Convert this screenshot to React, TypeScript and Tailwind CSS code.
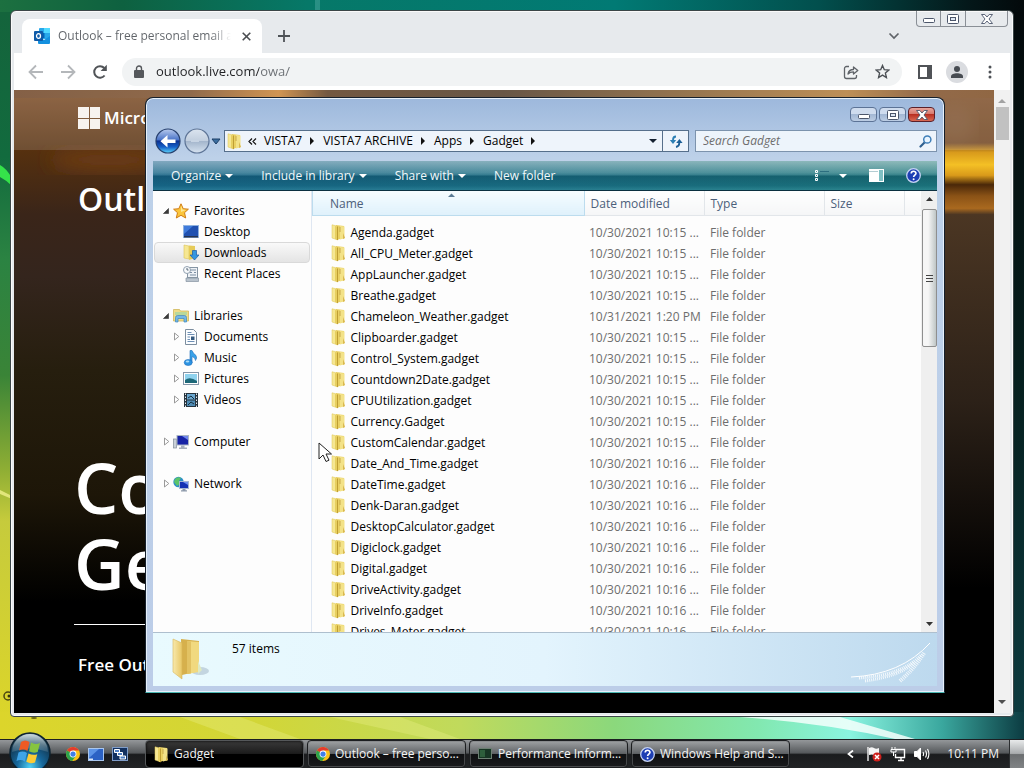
import type { ReactNode } from "react";

type FileRow = { name: string; date: string };

const FILES: FileRow[] = [
  { name: "Agenda.gadget", date: "10/30/2021 10:15 ..." },
  { name: "All_CPU_Meter.gadget", date: "10/30/2021 10:15 ..." },
  { name: "AppLauncher.gadget", date: "10/30/2021 10:15 ..." },
  { name: "Breathe.gadget", date: "10/30/2021 10:15 ..." },
  { name: "Chameleon_Weather.gadget", date: "10/31/2021 1:20 PM" },
  { name: "Clipboarder.gadget", date: "10/30/2021 10:15 ..." },
  { name: "Control_System.gadget", date: "10/30/2021 10:15 ..." },
  { name: "Countdown2Date.gadget", date: "10/30/2021 10:15 ..." },
  { name: "CPUUtilization.gadget", date: "10/30/2021 10:15 ..." },
  { name: "Currency.Gadget", date: "10/30/2021 10:15 ..." },
  { name: "CustomCalendar.gadget", date: "10/30/2021 10:15 ..." },
  { name: "Date_And_Time.gadget", date: "10/30/2021 10:16 ..." },
  { name: "DateTime.gadget", date: "10/30/2021 10:16 ..." },
  { name: "Denk-Daran.gadget", date: "10/30/2021 10:16 ..." },
  { name: "DesktopCalculator.gadget", date: "10/30/2021 10:16 ..." },
  { name: "Digiclock.gadget", date: "10/30/2021 10:16 ..." },
  { name: "Digital.gadget", date: "10/30/2021 10:16 ..." },
  { name: "DriveActivity.gadget", date: "10/30/2021 10:16 ..." },
  { name: "DriveInfo.gadget", date: "10/30/2021 10:16 ..." },
  { name: "Drives_Meter.gadget", date: "10/30/2021 10:16 ..." },
];

export default function App() {
  return (
    <div className="flex h-screen flex-col overflow-hidden bg-black font-['Open_Sans',sans-serif] text-[12px] text-black select-none">
      <main className="relative min-h-0 flex-1">
        <Wallpaper />
        <ChromeWindow />
        <ExplorerWindow />
        <svg className="absolute left-[318px] top-[442px]" width="14" height="21" viewBox="0 0 14 21">
          <path d="M1 1v16l4-4 3 6.500 3-1.300-3-6.200h5.500z" fill="#fff" stroke="#222" />
        </svg>
      </main>
      <Taskbar />
    </div>
  );
}

function Wallpaper() {
  return (
    <svg className="absolute inset-0 h-full w-full" viewBox="0 0 1024 739" preserveAspectRatio="none" aria-hidden>
      <defs>
        <linearGradient id="wpTop">
          <stop offset="0" stopColor="#1c7040" />
          <stop offset=".12" stopColor="#0e6140" />
          <stop offset=".3" stopColor="#067868" />
          <stop offset=".6" stopColor="#017a74" />
          <stop offset=".8" stopColor="#024f4d" />
          <stop offset=".95" stopColor="#041618" />
          <stop offset="1" stopColor="#03090b" />
        </linearGradient>
        <linearGradient id="wpLeft" x2="0" y2="1">
          <stop offset="0" stopColor="#14643c" />
          <stop offset=".2" stopColor="#126b3e" />
          <stop offset=".34" stopColor="#2b8342" />
          <stop offset=".5" stopColor="#3a8437" />
          <stop offset=".63" stopColor="#8fae34" />
          <stop offset=".7" stopColor="#c6cb3c" />
          <stop offset="1" stopColor="#ded628" />
        </linearGradient>
        <linearGradient id="wpBottom">
          <stop offset="0" stopColor="#dcd52b" />
          <stop offset=".25" stopColor="#d2d637" />
          <stop offset=".45" stopColor="#c0da5c" />
          <stop offset=".6" stopColor="#8bd87c" />
          <stop offset=".74" stopColor="#82e8b0" />
          <stop offset=".83" stopColor="#8af4e0" />
          <stop offset=".92" stopColor="#3aa79e" />
          <stop offset="1" stopColor="#0c3c42" />
        </linearGradient>
        <linearGradient id="wpRight" x2="0" y2="1">
          <stop offset="0" stopColor="#03090b" />
          <stop offset=".5" stopColor="#051f1e" />
          <stop offset="1" stopColor="#0c3c42" />
        </linearGradient>
      </defs>
      <rect width="1024" height="739" fill="url(#wpTop)" />
      <rect y="12" width="20" height="727" fill="url(#wpLeft)" />
      <rect x="1004" y="12" width="20" height="727" fill="url(#wpRight)" />
      <rect y="712" width="1024" height="27" fill="url(#wpBottom)" />
      <path d="M0 165q6 3 12 13v8q-6-6-12-9z" fill="#35e24a" />
      <path d="M0 490l12 6v3l-12-5z" fill="#e2e67a" />
      <path d="M180 717h60l60 22h-60zM330 717h70l60 22h-30z" fill="#eaf08a" opacity=".35" />
      <path d="M740 717h100l75 22h-20q-70-16-155-22z" fill="#f4fffb" opacity=".85" />
      <path d="M315 0h5v11h-5z" fill="#7cc9c6" opacity=".3" />
      <circle cx="8" cy="696" r="4" fill="none" stroke="#4a4712" strokeWidth="1.500" />
      <circle cx="9" cy="696" r="1.500" fill="#333010" />
      <ellipse cx="34" cy="718" rx="3" ry="1" fill="#6b6615" />
    </svg>
  );
}

/* ---------- browser ---------- */

function ChromeWindow() {
  return (
    <section className="absolute bottom-[22px] left-[10px] right-[10px] top-[10px] flex flex-col rounded-t-md rounded-b-sm border border-[#3b4648] bg-[#e7eaed] p-[3px] pt-0 shadow-[inset_0_0_0_1px_#fafafa]">
      <div className="flex h-[42px] shrink-0 items-start">
        <div className="ml-2 mt-2 flex h-[34px] w-[240px] items-center rounded-t-lg bg-white pl-3 pr-2">
          <OutlookIcon />
          <span className="ml-2 w-[173px] overflow-hidden whitespace-nowrap bg-linear-to-r from-[#5f6368] from-88% to-white bg-clip-text text-transparent">
            Outlook – free personal email and
          </span>
          <button aria-label="Close tab" className="ml-auto flex size-4 items-center justify-center">
            <svg width="9" height="9" viewBox="0 0 9 9" stroke="#4a4d51" strokeWidth="1.600">
              <path d="M.7.7l7.600 7.600M8.300.7L.7 8.300" />
            </svg>
          </button>
        </div>
        <button aria-label="New tab" className="ml-4 mt-[19px]">
          <svg width="12" height="12" viewBox="0 0 12 12" stroke="#4f5357" strokeWidth="1.800">
            <path d="M6 0v12M0 6h12" />
          </svg>
        </button>
        <button aria-label="Search tabs" className="ml-auto mr-[16px] mt-[21px]">
          <svg width="12" height="8" viewBox="0 0 12 8" fill="none" stroke="#5f6368" strokeWidth="1.700">
            <path d="M1.500 1.500L6 6l4.500-4.500" />
          </svg>
        </button>
        <div className="mr-[2px] flex h-4 divide-x divide-[#8a8f96] rounded-b border border-t-0 border-[#8a8f96]">
          <button aria-label="Minimize" className="flex w-6 items-center justify-center pt-1">
            <MinGlyph />
          </button>
          <button aria-label="Maximize" className="flex w-[25px] items-center justify-center">
            <MaxGlyph />
          </button>
          <button aria-label="Close" className="flex w-[41px] items-center justify-center">
            <CloseGlyph />
          </button>
        </div>
      </div>

      <div className="flex h-[37px] shrink-0 items-center bg-white pl-[14px] pr-[18px]">
        <button aria-label="Back">
          <svg width="16" height="16" viewBox="0 0 16 16" fill="none" stroke="#b4b7ba" strokeWidth="1.800">
            <path d="M15 8H2M8 1.500L1.500 8 8 14.500" />
          </svg>
        </button>
        <button aria-label="Forward" className="ml-4">
          <svg width="16" height="16" viewBox="0 0 16 16" fill="none" stroke="#b4b7ba" strokeWidth="1.800">
            <path d="M1 8h13M8 1.500L14.500 8 8 14.500" />
          </svg>
        </button>
        <button aria-label="Reload" className="ml-4">
          <svg width="16" height="16" viewBox="0 0 16 16">
            <path d="M12.600 11.500A5.800 5.800 0 1 1 12.300 4" fill="none" stroke="#505357" strokeWidth="2" />
            <path d="M14.800.8v6.200H8.600z" fill="#505357" />
          </svg>
        </button>
        <div className="ml-[14px] flex h-7 flex-1 items-center rounded-full bg-[#f1f3f4] pl-3 pr-3">
          <svg width="10" height="13" viewBox="0 0 10 13">
            <path d="M2.500 6V3.500a2.500 2.500 0 0 1 5 0V6" fill="none" stroke="#55585c" strokeWidth="1.400" />
            <rect y="5" width="10" height="8" rx="1" fill="#55585c" />
          </svg>
          <input
            aria-label="Address and search bar"
            defaultValue="outlook.live.com/owa/"
            className="ml-3 min-w-0 flex-1 bg-linear-to-r from-[#202124] from-[103px] to-[#6a6e73] to-[103px] bg-clip-text text-[13px] text-transparent outline-none"
          />
          <button aria-label="Share">
            <svg width="16" height="16" viewBox="0 0 16 16" fill="none" stroke="#5f6368" strokeWidth="1.300">
              <path d="M6 2.500H3.500a2 2 0 0 0-2 2v8a2 2 0 0 0 2 2h8a2 2 0 0 0 2-2V11" />
              <path d="M5 10c.5-3 2.500-4.500 5.500-4.500V3L14.800 6.500l-4.300 3.600V7.800C8 7.800 6.300 8.500 5 10z" strokeLinejoin="round" />
            </svg>
          </button>
          <button aria-label="Bookmark this tab" className="ml-4">
            <svg width="15" height="15" viewBox="0 0 15 15" fill="none" stroke="#4d5156" strokeWidth="1.400">
              <path d="M7.500 1.500l1.800 4.200 4.500.4-3.400 3 1 4.400-3.900-2.400-3.900 2.400 1-4.400-3.400-3 4.500-.4z" />
            </svg>
          </button>
        </div>
        <button aria-label="Side panel" className="ml-4">
          <svg width="14" height="14" viewBox="0 0 14 14">
            <rect x="1" y="1" width="12" height="12" fill="none" stroke="#505357" strokeWidth="2" />
            <rect x="9" width="5" height="14" fill="#505357" />
          </svg>
        </button>
        <button aria-label="Profile" className="ml-[14px] flex size-[22px] items-center justify-center rounded-full bg-[#dadce0]">
          <svg width="12" height="12" viewBox="0 0 12 12" fill="#474c52">
            <circle cx="6" cy="3" r="3" />
            <path d="M0 12v-1.500C0 8.500 3 7.300 6 7.300s6 1.200 6 3.200V12z" />
          </svg>
        </button>
        <button aria-label="Menu" className="ml-5">
          <svg width="4" height="14" viewBox="0 0 4 14" fill="#4d5156">
            <circle cx="2" cy="2" r="1.500" />
            <circle cx="2" cy="7" r="1.500" />
            <circle cx="2" cy="12" r="1.500" />
          </svg>
        </button>
      </div>

      <div className="flex min-h-0 flex-1">
        <WebPage />
        <div className="flex w-4 shrink-0 flex-col items-center justify-between bg-[#f1f1f1] py-2">
          <div className="flex flex-col items-center gap-1">
            <svg width="8" height="5" viewBox="0 0 8 5">
              <path d="M0 5l4-4 4 4z" fill="#a3a3a3" />
            </svg>
            <div className="h-[33px] w-[13px] bg-[#c1c1c1]" />
          </div>
          <svg width="8" height="5" viewBox="0 0 8 5">
            <path d="M0 0l4 4 4-4z" fill="#505050" />
          </svg>
        </div>
      </div>
    </section>
  );
}

function WebPage() {
  return (
    <div className="relative min-w-0 flex-1 overflow-hidden bg-black font-semibold text-white">
      <svg className="absolute inset-0 h-full w-full" viewBox="0 0 979 624" preserveAspectRatio="none" aria-hidden>
        <defs>
          <linearGradient id="photoL" x2="0" y2="1">
            <stop offset="0" stopColor="#7d4c26" />
            <stop offset=".1" stopColor="#55300f" />
            <stop offset=".2" stopColor="#3a2519" />
            <stop offset=".3" stopColor="#34251d" />
            <stop offset=".45" stopColor="#261e0e" />
            <stop offset=".65" stopColor="#1d1608" />
            <stop offset=".82" stopColor="#000" />
          </linearGradient>
          <linearGradient id="photoR" x2="0" y2="1">
            <stop offset="0" stopColor="#80502a" />
            <stop offset=".085" stopColor="#70441f" />
            <stop offset=".1" stopColor="#d89a1c" />
            <stop offset=".12" stopColor="#f4c025" />
            <stop offset=".137" stopColor="#d99a1a" />
            <stop offset=".152" stopColor="#4a2809" />
            <stop offset=".17" stopColor="#8a5216" />
            <stop offset=".19" stopColor="#a9691f" />
            <stop offset=".2" stopColor="#4b3623" />
            <stop offset=".5" stopColor="#2c2118" />
            <stop offset=".8" stopColor="#000" />
          </linearGradient>
          <linearGradient id="photoT">
            <stop offset="0" stopColor="#6f4526" />
            <stop offset=".18" stopColor="#7c502c" />
            <stop offset=".27" stopColor="#c98335" />
            <stop offset=".32" stopColor="#5b3b20" />
            <stop offset=".5" stopColor="#4f3a26" />
            <stop offset=".85" stopColor="#b27c3a" />
            <stop offset=".93" stopColor="#80502a" />
            <stop offset="1" stopColor="#7d4d23" />
          </linearGradient>
          <filter id="soft">
            <feGaussianBlur stdDeviation="9" />
          </filter>
        </defs>
        <rect width="500" height="624" fill="url(#photoL)" />
        <rect x="500" width="479" height="624" fill="url(#photoR)" />
        <rect width="979" height="8" fill="url(#photoT)" />
        <ellipse cx="95" cy="70" rx="60" ry="12" fill="#6b3a12" filter="url(#soft)" />
        <ellipse cx="940" cy="35" rx="20" ry="20" fill="#8f6a4c" filter="url(#soft)" opacity=".3" />
      </svg>
      <div className="relative flex h-[60px] items-center bg-white/15 pb-1 pl-16">
        <div className="grid size-[22px] grid-cols-2 gap-px">
          <i className="bg-[#f7f3ef]" />
          <i className="bg-[#f7f3ef]" />
          <i className="bg-[#f7f3ef]" />
          <i className="bg-[#f7f3ef]" />
        </div>
        <span className="ml-1 text-[17px]">Microsoft</span>
      </div>
      <div className="relative pl-16">
        <h2 className="pt-[27px] text-[32px] leading-[44px]">Outlook</h2>
        <h1 className="-ml-1 mt-[228px] text-[70px] leading-[76px]">
          Connect.
          <br />
          Get it.
        </h1>
        <hr className="-ml-1 mt-[23px] w-[420px] border-white" />
        <p className="pt-[28px] text-[17px] leading-6">Free Outlook</p>
      </div>
    </div>
  );
}

function OutlookIcon() {
  return (
    <svg width="16" height="16" viewBox="0 0 16 16">
      <rect x="5" width="11" height="11" rx="1" fill="#28a8ea" />
      <path d="M10 0h6v5h-6z" fill="#50d9ff" />
      <path d="M5 5h5.500v5H5z" fill="#0364b8" />
      <path d="M4 8l6 4 6-4v7a1 1 0 0 1-1 1H5a1 1 0 0 1-1-1z" fill="#1490df" />
      <rect y="3" width="9" height="10" rx="1" fill="#0f5ba8" />
      <ellipse cx="4.500" cy="8" rx="2" ry="2.300" fill="none" stroke="#fff" strokeWidth="1.300" />
    </svg>
  );
}

function MinGlyph() {
  return (
    <svg width="12" height="5" viewBox="0 0 12 5">
      <rect x=".5" y=".5" width="11" height="4" rx="1" fill="#fff" stroke="#4c566b" />
    </svg>
  );
}

function MaxGlyph() {
  return (
    <svg width="12" height="10" viewBox="0 0 12 10">
      <rect x=".5" y=".5" width="11" height="9" rx="1" fill="#fff" stroke="#4c566b" />
      <rect x="3.500" y="3.500" width="5" height="3" fill="#dde6f2" stroke="#4c566b" />
    </svg>
  );
}

function CloseGlyph() {
  return (
    <svg width="12" height="10" viewBox="0 0 12 10">
      <path d="M.5.500h3.300L6 3 8.200.5h3.300L8 5l3.500 4.500H8.200L6 7 3.800 9.500H.5L4 5z" fill="#fff" stroke="#4c566b" strokeWidth=".9" />
    </svg>
  );
}

/* ---------- explorer ---------- */

function ExplorerWindow() {
  return (
    <section className="absolute bottom-[46px] left-[145px] right-[79px] top-[97px] flex flex-col rounded-t-lg border border-[#16202c] border-b-[#4bb8b4] bg-linear-to-b from-[#9db8dc] via-[#bdd1e9] via-10% to-[#bccde8] px-[7px] pb-[6px] shadow-[inset_0_0_0_1px_#e6f0fa]">
      <div className="flex h-[29px] shrink-0 items-start justify-end gap-[2px] px-[2px] pt-[9px]">
        <button aria-label="Minimize" className="flex h-[15px] w-[27px] items-end justify-center rounded-sm border border-[#5c7396] bg-[linear-gradient(#cfdcee_50%,#a3b8d4_50%,#bccde4)] pb-[2px]">
          <MinGlyph />
        </button>
        <button aria-label="Maximize" className="flex h-[15px] w-[27px] items-center justify-center rounded-sm border border-[#5c7396] bg-[linear-gradient(#cfdcee_50%,#a3b8d4_50%,#bccde4)]">
          <MaxGlyph />
        </button>
        <button aria-label="Close" className="flex h-[15px] w-[27px] items-center justify-center rounded-sm border border-[#5b2029] bg-[linear-gradient(#e8a59c,#d5776b_48%,#b93022_50%,#d86a55)]">
          <CloseGlyph />
        </button>
      </div>

      <div className="flex h-[34px] shrink-0 items-start pl-[2px]">
        <div className="flex h-[28px] items-center">
          <NavButtons />
          <button aria-label="Recent pages" className="ml-px mr-[3px]">
            <svg width="10" height="7" viewBox="0 0 10 7">
              <path d="M1 1h8L5 6z" fill="#3b6ea0" stroke="#1d3f66" />
            </svg>
          </button>
        </div>
        <nav className="mt-[3px] flex h-[22px] min-w-0 flex-1 items-center border border-[#566f8b] bg-[#eef4fb] pl-[2px]" aria-label="Address">
          <FolderIcon />
          <svg className="ml-[6px]" width="9" height="7" viewBox="0 0 9 7" fill="none" stroke="#111" strokeWidth="1.200">
            <path d="M4 .5l-3 3 3 3M8 .5l-3 3 3 3" />
          </svg>
          {["VISTA7", "VISTA7 ARCHIVE", "Apps", "Gadget"].map((crumb) => (
            <span key={crumb} className="flex items-center">
              <a href="#" className="ml-[7px]">
                {crumb}
              </a>
              <svg className="ml-2 mr-[2px]" width="4" height="8" viewBox="0 0 4 8">
                <path d="M0 0l4 4-4 4z" fill="#111" />
              </svg>
            </span>
          ))}
          <button aria-label="Previous locations" className="ml-auto mr-[5px]">
            <svg width="8" height="4" viewBox="0 0 8 4">
              <path d="M0 0h8L4 4z" fill="#142030" />
            </svg>
          </button>
          <button aria-label="Refresh" className="flex h-full w-[26px] items-center justify-center border-l border-[#566f8b]">
            <svg width="14" height="13" viewBox="0 0 14 13" fill="none" strokeWidth="1.800">
              <path d="M7 1.500Q4 1.500 4 5v1" stroke="#2c7fb4" />
              <path d="M.8 5h6.400L4 9z" fill="#2c7fb4" />
              <path d="M7 12q3.300-.5 3.300-4V7" stroke="#1c5f96" />
              <path d="M7.200 8h6.400l-3.200-4z" fill="#1c5f96" />
            </svg>
          </button>
        </nav>
        <form className="ml-[6px] mt-[3px] flex h-[22px] w-[242px] items-center border border-[#7c93ad] bg-[#edf4fb] pr-1" onSubmit={(e) => e.preventDefault()}>
          <input aria-label="Search Gadget" placeholder="Search Gadget" className="min-w-0 flex-1 bg-transparent pl-[7px] italic outline-none placeholder:text-[#6d6d6d]" />
          <svg width="13" height="13" viewBox="0 0 13 13" fill="none">
            <path d="M6 7L1.500 11.500" stroke="#2e5f8f" strokeWidth="2.200" strokeLinecap="round" />
            <circle cx="8.300" cy="4.500" r="3.600" fill="#e8f4ff" stroke="#3f7fb8" strokeWidth="1.500" />
          </svg>
        </form>
      </div>

      <div className="flex min-h-0 flex-1 flex-col">
        <CommandBar />
        <div className="flex min-h-0 flex-1 bg-[#fdfdfd]">
          <NavPane />
          <FileList />
          <ListScrollbar />
        </div>
        <DetailsPane />
      </div>
    </section>
  );
}

function NavButtons() {
  return (
    <div className="flex items-center gap-[3px]">
      <button aria-label="Back">
        <svg width="26" height="26" viewBox="0 0 26 26">
          <defs>
            <linearGradient id="backBtn" x2="0" y2="1">
              <stop offset="0" stopColor="#b9cbee" />
              <stop offset=".45" stopColor="#4a74c8" />
              <stop offset=".5" stopColor="#0b2f8f" />
              <stop offset=".75" stopColor="#1560c8" />
              <stop offset="1" stopColor="#5fd6fa" />
            </linearGradient>
          </defs>
          <circle cx="13" cy="13" r="12" fill="url(#backBtn)" stroke="#27406e" strokeWidth="1.200" />
          <path d="M5.500 13.300l7-6.300v4.500h8v3.600h-8v4.500z" fill="#fff" />
        </svg>
      </button>
      <button aria-label="Forward">
        <svg width="26" height="26" viewBox="0 0 26 26">
          <defs>
            <linearGradient id="fwdBtn" x2="0" y2="1">
              <stop offset="0" stopColor="#dbe4ef" />
              <stop offset=".48" stopColor="#c2cfdf" />
              <stop offset=".52" stopColor="#a4b6cc" />
              <stop offset="1" stopColor="#d5e2f0" />
            </linearGradient>
          </defs>
          <circle cx="13" cy="13" r="12" fill="url(#fwdBtn)" stroke="#5d7496" strokeWidth="1.200" />
          <path d="M7 13h8" stroke="#c7d4e3" strokeWidth="2" />
        </svg>
      </button>
    </div>
  );
}

function CommandBar() {
  return (
    <div className="flex h-[30px] shrink-0 items-center gap-7 border-b border-[#0b3040] bg-[linear-gradient(to_right,#0a4f9a40,#1a8a6c30),linear-gradient(#a9c6cc,#5d98a3_40%,#3f8291_48%,#155a6c_52%,#1a6a7c_85%,#2f8494)] pl-[18px] pr-4 text-[#f2f9fb] [text-shadow:0_1px_2px_#06303f]">
      <MenuButton>Organize</MenuButton>
      <MenuButton>Include in library</MenuButton>
      <MenuButton>Share with</MenuButton>
      <button>New folder</button>
      <div className="ml-auto flex items-center">
        <button aria-label="Change your view" className="mr-[10px]">
          <svg width="16" height="12" viewBox="0 0 16 12" fill="none" stroke="#fff">
            <path d="M2.500.500h2v2h-2zM2.500 4.500h2v2h-2zM2.500 8.500h2v2h-2z" />
            <path d="M7 1.500h9" stroke="#2c6e7f" />
          </svg>
        </button>
        <button aria-label="View options" className="mr-[22px]">
          <DownArrow />
        </button>
        <button aria-label="Preview pane" className="mr-[22px]">
          <svg width="15" height="13" viewBox="0 0 15 13">
            <rect width="15" height="13" fill="#fff" />
            <rect x="10" y="1" width="4" height="11" fill="#7fc0c4" />
            <path d="M0 2.500h9" stroke="#b4cdd3" />
          </svg>
        </button>
        <button aria-label="Help">
          <HelpIcon />
        </button>
      </div>
    </div>
  );
}

function MenuButton({ children }: { children: ReactNode }) {
  return (
    <button className="flex items-center gap-1">
      {children}
      <DownArrow />
    </button>
  );
}

function DownArrow() {
  return (
    <svg width="8" height="4" viewBox="0 0 8 4">
      <path d="M0 0h8L4 4z" fill="#fff" />
    </svg>
  );
}

function HelpIcon() {
  return (
    <svg className="shrink-0" width="15" height="15" viewBox="0 0 15 15">
      <circle cx="7.500" cy="7.500" r="6.800" fill="#1e3fb4" stroke="#c5d3f3" strokeWidth="1.300" />
      <path d="M5.200 5.600c0-3.200 4.800-3 4.800-.3 0 1.800-2.400 1.800-2.400 3.700" fill="none" stroke="#fff" strokeWidth="1.600" />
      <circle cx="7.600" cy="11.300" r="1" fill="#fff" />
    </svg>
  );
}

function NavPane() {
  return (
    <aside className="w-[159px] shrink-0 border-r border-[#dfe7f2] pt-[9px] leading-[21px]">
      <NavGroup label="Favorites" icon={<StarIcon />} open>
        <NavItem label="Desktop" icon={<DesktopIcon />} />
        <NavItem label="Downloads" icon={<DownloadsIcon />} selected />
        <NavItem label="Recent Places" icon={<RecentIcon />} />
      </NavGroup>
      <NavGroup label="Libraries" icon={<LibrariesIcon />} open>
        <NavItem label="Documents" icon={<DocumentIcon />} expandable />
        <NavItem label="Music" icon={<MusicIcon />} expandable />
        <NavItem label="Pictures" icon={<PictureIcon />} expandable />
        <NavItem label="Videos" icon={<VideoIcon />} expandable />
      </NavGroup>
      <NavGroup label="Computer" icon={<ComputerIcon />} />
      <NavGroup label="Network" icon={<NetworkIcon />} />
    </aside>
  );
}

function NavGroup({ label, icon, open, children }: { label: string; icon: ReactNode; open?: boolean; children?: ReactNode }) {
  return (
    <div className="mb-[21px]">
      <a href="#" className="flex h-[21px] items-center pl-[10px]">
        <span className="flex w-[10px]">{open ? <OpenTriangle /> : <ClosedTriangle />}</span>
        {icon}
        <span className="ml-[5px]">{label}</span>
      </a>
      {children}
    </div>
  );
}

function NavItem({ label, icon, selected, expandable }: { label: string; icon: ReactNode; selected?: boolean; expandable?: boolean }) {
  return (
    <a
      href="#"
      className={
        selected
          ? "mx-px flex h-[21px] items-center rounded-sm border border-[#d9d9d9] bg-linear-to-b from-[#f9f9f9] to-[#e4e4e4] pl-[18px]"
          : "flex h-[21px] items-center pl-5"
      }
    >
      <span className="flex w-[10px]">{expandable && <ClosedTriangle />}</span>
      {icon}
      <span className="ml-[5px]">{label}</span>
    </a>
  );
}

function OpenTriangle() {
  return (
    <svg width="6" height="6" viewBox="0 0 7 7">
      <path d="M6.500.500v6h-6z" fill="#3a3a3a" stroke="#222" strokeWidth=".6" />
    </svg>
  );
}

function ClosedTriangle() {
  return (
    <svg width="7" height="9" viewBox="0 0 7 9">
      <path d="M1.500 1l4.300 3.500L1.500 8z" fill="#fff" stroke="#9a9a9a" />
    </svg>
  );
}

function FileList() {
  return (
    <div className="min-w-0 flex-1 overflow-hidden">
      <table className="w-full table-fixed border-collapse text-left">
        <colgroup>
          <col />
          <col className="w-[120px]" />
          <col className="w-[120px]" />
          <col className="w-[80px]" />
          <col className="w-[17px]" />
        </colgroup>
        <thead>
          <tr className="h-6 text-[#4c607a]">
            <th className="relative border border-t-0 border-[#bcdcee] bg-linear-to-b from-[#f6fcff] to-[#dff1fb] pl-[17px] pt-[3px] font-normal">
              Name
              <svg className="absolute left-1/2 top-[2px]" width="7" height="4" viewBox="0 0 7 4">
                <path d="M0 4l3.500-3.500L7 4z" fill="#5b7a94" />
              </svg>
            </th>
            <th className="border-b border-r border-[#e2e6ea] bg-linear-to-b from-white to-[#f5f6f7] pl-[6px] pt-[3px] font-normal">Date modified</th>
            <th className="border-b border-r border-[#e2e6ea] bg-linear-to-b from-white to-[#f5f6f7] pl-[6px] pt-[3px] font-normal">Type</th>
            <th className="border-b border-r border-[#e2e6ea] bg-linear-to-b from-white to-[#f5f6f7] pl-[6px] pt-[3px] font-normal">Size</th>
            <th className="border-b border-[#e2e6ea] bg-linear-to-b from-white to-[#f5f6f7]" />
          </tr>
        </thead>
        <tbody>
          <tr className="h-[7px]" aria-hidden>
            <td colSpan={5} />
          </tr>
          {FILES.map((file) => (
            <tr key={file.name} className="h-[21px] text-[#6d6d6d]">
              <td className="p-0 text-black">
                <span className="flex items-center pl-[18px] leading-[21px]">
                  <FolderIcon />
                  <span className="ml-[5px]">{file.name}</span>
                </span>
              </td>
              <td className="whitespace-nowrap p-0 pl-[5px]">{file.date}</td>
              <td className="p-0 pl-[6px]">File folder</td>
              <td />
              <td />
            </tr>
          ))}
        </tbody>
      </table>
    </div>
  );
}

function ListScrollbar() {
  return (
    <div className="flex w-4 shrink-0 flex-col items-center bg-[#efefef] pt-[6px]">
      <svg width="7" height="4" viewBox="0 0 7 4">
        <path d="M0 4l3.500-4L7 4z" fill="#333" />
      </svg>
      <div className="mt-2 flex h-[138px] w-[15px] flex-col items-center justify-center gap-[2px] rounded-xs border border-[#8f8f8f] bg-linear-to-r from-[#f6f6f6] from-40% to-[#bfc6c6]">
        <i className="h-px w-[7px] bg-[#444]" />
        <i className="h-px w-[7px] bg-[#444]" />
        <i className="h-px w-[7px] bg-[#444]" />
      </div>
      <svg className="mb-[6px] mt-auto" width="7" height="4" viewBox="0 0 7 4">
        <path d="M0 0l3.500 4L7 0z" fill="#333" />
      </svg>
    </div>
  );
}

function DetailsPane() {
  return (
    <div className="flex h-[54px] shrink-0 items-start border-t border-[#aebfce] bg-linear-to-r from-[#e9fafe] via-[#e3f4fd] via-50% to-[#bdd9ee]">
      <svg className="ml-[18px] mt-1" width="40" height="44" viewBox="0 0 40 44">
        <defs>
          <linearGradient id="bigFolder">
            <stop offset="0" stopColor="#f8e9ac" />
            <stop offset="1" stopColor="#e8c765" />
          </linearGradient>
        </defs>
        <ellipse cx="29" cy="34" rx="9" ry="4" fill="#7d93a8" opacity=".35" />
        <path d="M10 2l18 2v30l-17 4z" fill="#d6b04c" />
        <path d="M16 4l12 1v30l-12 2z" fill="#f1d97f" />
        <path d="M16 4l4 .5v32l-4 .5z" fill="#e2c263" />
        <path d="M2 2l9 4v36l-9-7z" fill="url(#bigFolder)" stroke="#d8b658" strokeWidth=".6" />
        <path d="M27 24l4 9-4 4z" fill="#dfe9c0" />
      </svg>
      <span className="ml-[21px] mt-2 leading-4">57 items</span>
      <svg className="ml-auto mr-1 mt-[9px]" width="82" height="42" viewBox="0 0 82 42" fill="none" stroke="#fff">
        <path d="M0 35q50-2 79-34" />
        <path d="M8 36q44-3 62-23" strokeWidth="3" strokeDasharray="1 1" opacity=".8" />
        <path d="M14 39q36-5 50-19" strokeWidth="3" strokeDasharray="1 1" opacity=".8" />
        <path d="M49 39q14-12 24-28" strokeWidth="4" strokeDasharray="1 1" opacity=".8" />
      </svg>
    </div>
  );
}

/* ---------- small icons ---------- */

function FolderIcon() {
  return (
    <svg className="shrink-0" width="15" height="17" viewBox="0 0 15 17">
      <path d="M5 1l8 1v12l-8 2z" fill="#ead163" />
      <path d="M9 2l4.500.6v11.600L9 15.500z" fill="#f3e288" />
      <path d="M1 .8l5 1.200.8 14L1 14z" fill="#f6e792" stroke="#dcc458" strokeWidth=".5" />
      <path d="M4 2l2 .5.800 13L4 15z" fill="#e7cf60" />
      <path d="M6.500 2.500v13.500" stroke="#bf9e33" />
      <path d="M9 3v5" stroke="#c9aa4c" />
      <path d="M12 9l2 5-2 1z" fill="#d9b84f" />
    </svg>
  );
}

function StarIcon() {
  return (
    <svg width="16" height="16" viewBox="0 0 16 16">
      <path d="M8 .8l2.200 4.900 5.200.5-3.900 3.500 1.200 5.300L8 12.300 3.300 15l1.200-5.300L.6 6.200l5.200-.5z" fill="#fbc63c" stroke="#d07c14" />
      <path d="M8 2.500l1.500 4 3.500.5-5 2z" fill="#fde795" />
    </svg>
  );
}

function DesktopIcon() {
  return (
    <svg width="16" height="13" viewBox="0 0 16 13">
      <rect x=".5" y=".5" width="15" height="12" fill="#1f50b0" stroke="#8fb2df" />
      <path d="M1 1h9L1 9z" fill="#3f7bdb" />
      <path d="M1 11h14v1.500H1z" fill="#26344f" />
    </svg>
  );
}

function DownloadsIcon() {
  return (
    <svg width="16" height="17" viewBox="0 0 16 17">
      <path d="M1 1l5 1v13l-5-1z" fill="#f6e792" stroke="#dcc458" strokeWidth=".6" />
      <path d="M6 1.500l6 .5v12l-6 2z" fill="#e6cb59" />
      <path d="M9.500 6.500h4v4.500H16L11.500 16 7 11h2.500z" fill="#3596e0" stroke="#1a5aa6" strokeWidth=".7" />
    </svg>
  );
}

function RecentIcon() {
  return (
    <svg width="16" height="16" viewBox="0 0 16 16">
      <rect x="4.500" y="1.500" width="10" height="10" fill="#eef2f6" stroke="#8695a4" />
      <path d="M7 4h6M7 6.500h2M11 6.500h2M7 9h6" stroke="#7d8fa3" />
      <path d="M3 12h12.500v3.500H3z" fill="#b9c3cd" stroke="#8592a0" strokeWidth=".7" />
      <circle cx="4" cy="4" r="3.500" fill="#f8fafc" stroke="#92a1b0" />
      <path d="M4 2v2h1.500" stroke="#567" fill="none" />
    </svg>
  );
}

function LibrariesIcon() {
  return (
    <svg width="16" height="15" viewBox="0 0 16 15">
      <path d="M.5 1.500h6l1 1.500h8v10H.5z" fill="#f1dc86" stroke="#cfb75c" strokeWidth=".8" />
      <path d="M2 4h12v3H2z" fill="#b9d89a" />
      <path d="M2.500 14V9.500q0-2 2-2h7q2 0 2 2V14h-2.500v-3.500h-6V14z" fill="#73b7e6" stroke="#3e86be" strokeWidth=".7" />
    </svg>
  );
}

function DocumentIcon() {
  return (
    <svg width="16" height="16" viewBox="0 0 16 16">
      <path d="M2.500.5h8l3 3v12h-11z" fill="#fbfdff" stroke="#7c8d9e" />
      <path d="M4.500 3.500h4M4.500 5.500h7M4.500 12.500h7M4.500 10.500h2.500M4.500 8h2.500" stroke="#6e8fb4" />
      <path d="M8 7.500h3.500v3.500H8z" fill="#35597e" />
    </svg>
  );
}

function MusicIcon() {
  return (
    <svg width="16" height="16" viewBox="0 0 16 16">
      <path d="M7 .5h2q1 3 4 5 1.500 2.500-.5 5 0-3-3.500-4v6.500H7z" fill="#39a2e8" stroke="#1c6cba" strokeWidth=".6" />
      <ellipse cx="5.200" cy="12.500" rx="4" ry="3" fill="#2c93e2" stroke="#1c6cba" strokeWidth=".6" />
      <ellipse cx="4.500" cy="11.600" rx="1.800" ry="1" fill="#a9dcfa" />
    </svg>
  );
}

function PictureIcon() {
  return (
    <svg width="16" height="13" viewBox="0 0 16 13">
      <rect x=".5" y=".5" width="15" height="12" fill="#fff" stroke="#8596a8" />
      <rect x="2" y="2" width="12" height="9" fill="#8fd2ee" />
      <path d="M2 8q5-4 12 1v2H2z" fill="#1d6878" />
    </svg>
  );
}

function VideoIcon() {
  return (
    <svg width="16" height="16" viewBox="0 0 16 16">
      <rect x="1" y="1" width="14" height="14" fill="#26333d" />
      <rect x="4" y="2" width="8" height="5.500" fill="#6aa6cf" />
      <rect x="4" y="8.500" width="8" height="5.500" fill="#4f8bb4" />
      <path d="M5 6l3-2 3 3M5 13l3-3 3 2" stroke="#16303f" fill="none" />
      <path d="M2.500 1.500v14M13.500 1.500v14" stroke="#e4ebf0" strokeDasharray="1.500 1.500" />
    </svg>
  );
}

function ComputerIcon() {
  return (
    <svg width="16" height="16" viewBox="0 0 16 16">
      <rect x=".5" y="5" width="3" height="9" fill="#c9d0d8" stroke="#818c97" strokeWidth=".7" />
      <rect x="4" y="1.500" width="11.500" height="9.500" fill="#1723a5" stroke="#aab5c4" />
      <path d="M9 2h6v4z" fill="#6f86ec" />
      <path d="M8 11.500h3.500v2H14V15H6v-1.500h2z" fill="#a6aebb" />
    </svg>
  );
}

function NetworkIcon() {
  return (
    <svg width="16" height="16" viewBox="0 0 16 16">
      <circle cx="5.500" cy="6" r="5.200" fill="#2c8fc9" />
      <path d="M2 3q3-3 6-1l-2 3 1 3-3 2-3-4z" fill="#5cc46a" />
      <rect x="6.500" y="5.500" width="9" height="7" fill="#1432b4" stroke="#a5b7d4" />
      <path d="M10 6h5v3z" fill="#6c8ef0" />
      <path d="M9.500 13h3v1.200H14v1.300H8v-1.300h1.500z" fill="#8e9aab" />
    </svg>
  );
}

function ChromeIcon() {
  return (
    <svg className="shrink-0" width="14" height="14" viewBox="0 0 16 16">
      <circle cx="8" cy="8" r="8" fill="#fbc116" />
      <path d="M8 8L1.100 4A8 8 0 0 1 14.900 4H8z" fill="#e33b2e" />
      <path d="M8 8L1.100 4a8 8 0 0 0 5.900 11.900L11.500 10z" fill="#2ba24c" />
      <circle cx="8" cy="8" r="3.900" fill="#fff" />
      <circle cx="8" cy="8" r="3" fill="#3f7fe8" />
    </svg>
  );
}

/* ---------- taskbar ---------- */

function Taskbar() {
  return (
    <footer className="relative flex h-[29px] shrink-0 items-stretch border-t border-[#1c1f22] bg-[linear-gradient(#94979a,#55585b_46%,#1a1b1d_52%,#222426)] text-[#f4f4f4]">
      <button aria-label="Start" className="absolute bottom-[-6px] left-[9px]">
        <StartOrb />
      </button>
      <div className="ml-[66px] flex items-center gap-2">
        <button aria-label="Chrome">
          <ChromeIcon />
        </button>
        <button aria-label="Show desktop">
          <svg width="16" height="13" viewBox="0 0 16 13">
            <rect x=".5" y=".5" width="15" height="12" fill="#2c62c4" stroke="#a9c6ee" />
            <path d="M1 1h10L1 10z" fill="#5b93e6" />
            <path d="M1 10.500h4v1.500H1z" fill="#dbe7f7" />
          </svg>
        </button>
        <button aria-label="Switch between windows">
          <svg width="16" height="14" viewBox="0 0 16 14">
            <rect x=".5" y=".5" width="15" height="13" fill="#12305f" stroke="#7f9cc8" />
            <path d="M2.500 2.500h5v3h-5zM5.500 5.500h5v3h-5zM8 9h5.500v3H8z" fill="#4f80c4" stroke="#fff" />
          </svg>
        </button>
      </div>
      <div className="ml-[17px] flex max-w-[645px] flex-1 gap-[3px]">
        <TaskButton label="Gadget" active icon={<FolderIcon />} />
        <TaskButton label="Outlook – free perso..." icon={<ChromeIcon />} />
        <TaskButton
          label="Performance Inform..."
          icon={
            <svg className="shrink-0" width="15" height="12" viewBox="0 0 15 12">
              <rect x=".5" y=".5" width="13" height="10" fill="#173524" stroke="#6c7f72" />
              <path d="M2 2h5v7H2z" fill="#2e5e3c" />
            </svg>
          }
        />
        <TaskButton label="Windows Help and S..." icon={<HelpIcon />} />
      </div>
      <div className="ml-auto flex items-center">
        <button aria-label="Show hidden icons">
          <svg width="7" height="8" viewBox="0 0 7 8" fill="none" stroke="#fff" strokeWidth="1.700">
            <path d="M6 .5L1.500 4 6 7.500" />
          </svg>
        </button>
        <svg className="ml-3" width="16" height="16" viewBox="0 0 16 16">
          <path d="M2 1v14" stroke="#fff" strokeWidth="1.300" />
          <path d="M3 2q3-1.500 5 0t5 0v7q-3 1-5 0t-5 0z" fill="#f4f4f4" />
          <circle cx="11" cy="11" r="4.500" fill="#d0201c" />
          <path d="M9 9l4 4M13 9l-4 4" stroke="#fff" strokeWidth="1.500" />
        </svg>
        <svg className="ml-2" width="16" height="16" viewBox="0 0 16 16" fill="none" stroke="#fff">
          <path d="M6 3.500h8.500v8H5.500V8M8 14.500h6M11 12v2" strokeWidth="1.400" />
          <path d="M2 1v2M5 1v2M1 3.500h5v2.500H1zM3.500 6v4" />
        </svg>
        <svg className="ml-2" width="16" height="14" viewBox="0 0 16 14" fill="none" stroke="#fff">
          <path d="M.5 4.500H3L6.500 1v12L3 9.500H.5z" fill="#fff" />
          <path d="M9 5q1.200 2 0 4M11.500 3.500q2 3.500 0 7M13.500 2q2.800 5 0 10" strokeWidth="1.100" />
        </svg>
        <time className="ml-[17px] mr-[10px] whitespace-nowrap">10:11 PM</time>
      </div>
      <button aria-label="Peek at desktop" className="w-[15px] border-l border-[#2b2e30] bg-[linear-gradient(#e8eaeb,#a9acae_48%,#6b6e70_52%,#808385)]" />
    </footer>
  );
}

function TaskButton({ label, icon, active }: { label: string; icon: ReactNode; active?: boolean }) {
  return (
    <button
      className={
        active
          ? "flex min-w-0 flex-1 items-center gap-[5px] rounded-sm border border-[#55585a] bg-[linear-gradient(#3a3a3a,#1c1c1c_48%,#000_50%)] pl-2 text-left shadow-[inset_0_0_3px_#000]"
          : "flex min-w-0 flex-1 items-center gap-[5px] rounded-sm border border-[#1c1e20] bg-[linear-gradient(#9fa2a4,#606366_48%,#0e0f11_50%,#1a1b1d)] pl-2 text-left shadow-[inset_0_0_0_1px_#77797b80]"
      }
    >
      {icon}
      <span className="truncate">{label}</span>
    </button>
  );
}

function StartOrb() {
  return (
    <svg width="42" height="42" viewBox="0 0 42 42">
      <defs>
        <radialGradient id="orb" cx=".5" cy=".85" r=".8">
          <stop offset="0" stopColor="#4fd0f5" />
          <stop offset=".4" stopColor="#17689c" />
          <stop offset=".8" stopColor="#123a56" />
          <stop offset="1" stopColor="#3c5a6a" />
        </radialGradient>
        <linearGradient id="orbShine" x2="0" y2="1">
          <stop offset="0" stopColor="#e6f1f4" stopOpacity=".85" />
          <stop offset="1" stopColor="#8aa5b0" stopOpacity=".25" />
        </linearGradient>
      </defs>
      <circle cx="21" cy="21" r="20" fill="url(#orb)" stroke="#0c2230" strokeWidth="1.500" />
      <path d="M3 20a18 18 0 0 1 36 0q-18-7-36 0z" fill="url(#orbShine)" />
      <path d="M12 10q4-3 8.500 0l-2 9q-4-2.500-8.500-.5z" fill="#ee5a24" />
      <path d="M22 10.500q4 2.500 9 .5l-2.300 9q-4.300 1.700-8.700-.7z" fill="#86c440" />
      <path d="M9.500 20.500q4.500-2 8.500.5l-2.200 8.500q-4-2.500-8.300-.5z" fill="#3fa4e8" />
      <path d="M19.500 21.500q4.300 2.200 8.800.7L26 30.500q-4.500 1.800-8.700-.7z" fill="#fccb35" />
    </svg>
  );
}
